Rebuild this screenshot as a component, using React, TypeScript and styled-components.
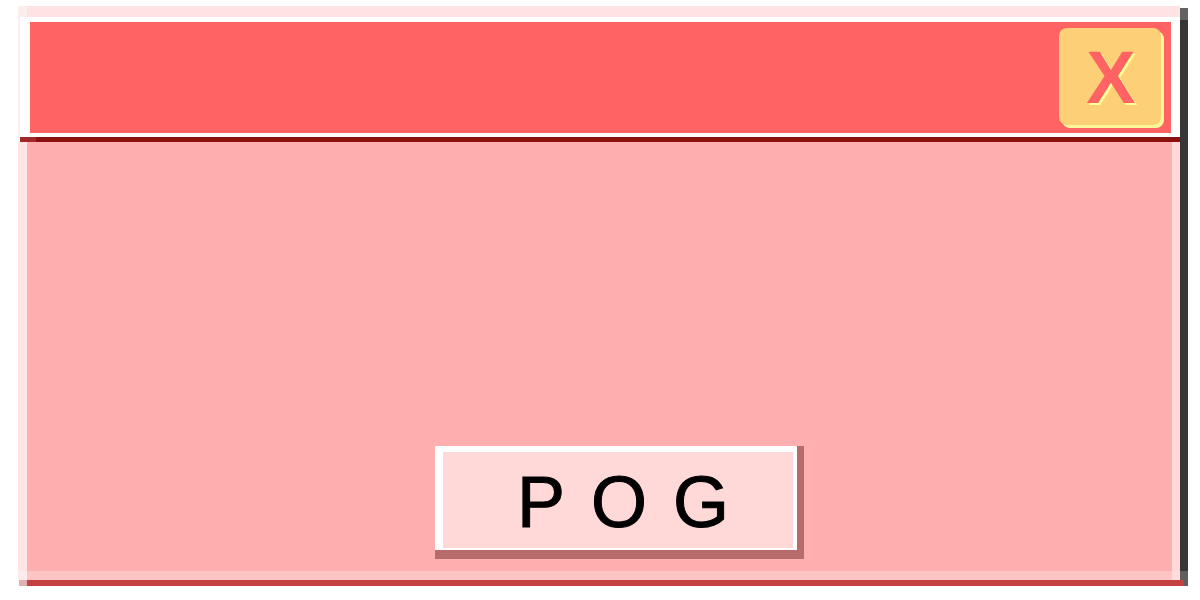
import React from "react";
import styled, { createGlobalStyle } from "styled-components";

const Global = createGlobalStyle`
  html, body { margin: 0; padding: 0; background: #ffffff; }
  body { font-family: "Liberation Sans", Arial, sans-serif; }
  * { box-sizing: border-box; }
`;

const Page = styled.div`
  display: flex;
  align-items: flex-start;
  padding: 6px 0 0 18px;
  width: 1200px;
  height: 600px;
`;

const Frame = styled.div`
  display: flex;
  flex-direction: column;
  width: 1162px;
  height: 580px;
`;

const ShadowColumn = styled.div`
  width: 8px;
  height: 578px;
  margin-top: 2px;
  background: linear-gradient(
    #626262 0 12px,
    #363636 12px calc(100% - 15px),
    #5f5f5f calc(100% - 15px)
  );
`;

const TopStrip = styled.div`
  height: 11px;
  background: #fde3e3;
  border-left: 9px solid #fdeeee;
`;

const HeaderRow = styled.div`
  display: flex;
  height: 120px;
  border-left: 2px solid #fdeeee;
`;

const TitleFrame = styled.div`
  flex: 1;
  display: flex;
  background: #ffffff;
  padding: 5px 9px 4px 10px;
`;

const TitleBar = styled.div`
  flex: 1;
  display: flex;
  justify-content: flex-end;
  align-items: flex-start;
  background: #ff6363;
  padding: 6px 10px 0 0;
`;

const CloseButton = styled.button`
  width: 102px;
  height: 97px;
  border: none;
  border-radius: 8px;
  background: #fdd077;
  box-shadow: 3px 3px 0 #fdf79c;
  display: flex;
  align-items: center;
  justify-content: center;
  padding: 2px 0 0 2px;
  font-family: "Liberation Sans", Arial, sans-serif;
  font-size: 74px;
  font-weight: 700;
  line-height: 1;
  color: #ff6363;
  text-shadow: 2px 2px 0 #ffff99;
  cursor: pointer;
`;

const DarkLine = styled.div`
  height: 5px;
  margin-left: 2px;
  background: linear-gradient(90deg, #9f2828 16px, #8b1111 16px);
`;

const Body = styled.div`
  flex: 1;
  display: flex;
  align-items: flex-end;
  padding: 0 0 12px 408px;
  background: #ffafaf;
  border-left: 9px solid #fde5e5;
  border-right: 8px solid #ffd9d9;
`;

const BottomStrip = styled.div`
  height: 9px;
  background: #ffc5c5;
  border-left: 9px solid #fdeaea;
  border-right: 8px solid #ffdcdc;
`;

const BottomBar = styled.div`
  height: 6px;
  margin-left: 1px;
  margin-right: -4px;
  position: relative;
  background: #c44141;
  border-left: 8px solid #e2b0b0;
`;

const PogButton = styled.button`
  width: 369px;
  height: 113px;
  display: flex;
  padding: 6px 4px 2px 8px;
  background: #ffffff;
  border: none;
  border-right: 7px solid #b76b6b;
  border-bottom: 9px solid #b76b6b;
  cursor: pointer;
`;

const PogFace = styled.span`
  flex: 1;
  display: flex;
  align-items: center;
  justify-content: center;
  padding: 4px 0 0 36px;
  background: #ffd8d8;
  font-family: "Liberation Sans", Arial, sans-serif;
  font-size: 72px;
  line-height: 1;
  letter-spacing: 26px;
  color: #000000;
  -webkit-text-stroke: 1px #000000;
`;

export default function App() {
  return (
    <>
      <Global />
      <Page>
        <Frame>
          <TopStrip />
          <HeaderRow>
            <TitleFrame>
              <TitleBar>
                <CloseButton aria-label="Close">X</CloseButton>
              </TitleBar>
            </TitleFrame>
          </HeaderRow>
          <DarkLine />
          <Body>
            <PogButton>
              <PogFace>POG</PogFace>
            </PogButton>
          </Body>
          <BottomStrip />
          <BottomBar />
        </Frame>
        <ShadowColumn />
      </Page>
    </>
  );
}
